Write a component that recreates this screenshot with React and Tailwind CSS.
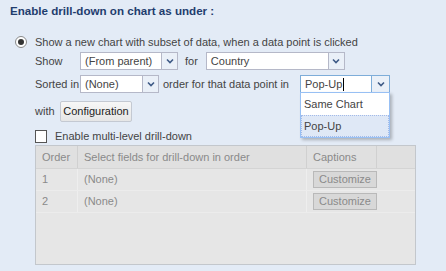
import React from "react";

const Chevron = () => (
  <svg width="8" height="6" viewBox="0 0 8 6">
    <polyline points="1,1.5 4,4.5 7,1.5" fill="none" stroke="#3e5a86" strokeWidth="1.6" />
  </svg>
);

const Combo = ({ value, width, trigger = 16, focused, children }) => (
  <div className="relative flex h-[18px] shrink-0">
    <div
      className={`flex items-center bg-white pl-[4px] border ${
        focused ? "border-[#7eadd9]" : "border-[#b5b8c8]"
      }`}
      style={{ width }}
    >
      <span className="leading-none">{value}</span>
      {focused && <span className="ml-[1px] h-[13px] w-px bg-black" />}
    </div>
    <div
      className={`flex items-center justify-center border border-l-0 bg-[#eaf0f8] ${
        focused ? "border-[#7eadd9]" : "border-[#b5b8c8]"
      }`}
      style={{ width: trigger }}
    >
      <Chevron />
    </div>
    {children}
  </div>
);

const CustomizeBtn = () => (
  <div className="flex h-[17px] w-[64px] items-center justify-center border border-[#b9b9b9] bg-[#d8d8d8] text-[#8a8a8a]">
    Customize
  </div>
);

export default function App() {
  return (
    <div
      className="h-[271px] w-[446px] overflow-hidden bg-[#e3ebf6] text-[11px] text-[#444] whitespace-nowrap"
      style={{ fontFamily: '"Liberation Sans", Arial, sans-serif' }}
    >
      {/* Title */}
      <div className="flex h-[22px] items-center pl-[10px] text-[11.6px] font-bold text-[#1f3d6e]">
        Enable drill-down on chart as under :
      </div>

      {/* Radio option */}
      <div className="mt-[14px] flex h-[12px] items-center pl-[15px]">
        <div className="flex h-[12px] w-[12px] items-center justify-center rounded-full border border-[#8a8a8a] bg-white">
          <div className="h-[6px] w-[6px] rounded-full bg-[#333]" />
        </div>
        <span className="ml-[8px]">Show a new chart with subset of data, when a data point is clicked</span>
      </div>

      <div className="pl-[35px]">
        {/* Show row */}
        <div className="mt-[4px] flex h-[18px] items-center">
          <span className="w-[45px] shrink-0">Show</span>
          <Combo value="(From parent)" width={82} />
          <span className="ml-[7px] mr-[8px]">for</span>
          <Combo value="Country" width={123} />
        </div>

        {/* Sorted row */}
        <div className="mt-[5px] flex h-[18px] items-center">
          <span className="w-[45px] shrink-0">Sorted in</span>
          <Combo value="(None)" width={63} />
          <span className="ml-[4px] w-[137px] shrink-0">order for that data point in</span>
          <Combo value="Pop-Up" width={72} trigger={18} focused>
            <div className="absolute left-0 top-[17px] z-10 w-[90px] border border-[#98c0f4] bg-white shadow-[2px_2px_3px_rgba(0,0,0,0.25)]">
              <div className="flex h-[22px] items-center pl-[3px]">Same Chart</div>
              <div className="flex h-[22px] items-center border border-dotted border-[#a3bae9] bg-[#dfe8f6] pl-[2px]">
                Pop-Up
              </div>
            </div>
          </Combo>
        </div>

        {/* With row */}
        <div className="mt-[8px] flex h-[21px] items-center">
          <span className="w-[25px] shrink-0">with</span>
          <div className="flex h-[21px] w-[72px] items-center justify-center rounded-[2px] border border-[#c4c9d2] bg-gradient-to-b from-[#f7f7f7] to-[#e6e6e6] text-[#222]">
            Configuration
          </div>
        </div>

        {/* Checkbox row */}
        <div className="mt-[8px] flex h-[13px] items-center">
          <div className="h-[13px] w-[12px] border border-[#555] bg-white" />
          <span className="ml-[8px]">Enable multi-level drill-down</span>
        </div>

        {/* Table */}
        <div className="mt-[2px] h-[120px] w-[381px] border border-[#c3c7cc] bg-[#e6e6e6] text-[#8a8a8a]">
          <div className="flex h-[23px] border-b border-[#d4d4d4] bg-[#e0e0e0]">
            <div className="flex w-[42px] items-center border-r border-[#d0d0d0] pl-[6px]">Order</div>
            <div className="flex w-[229px] items-center border-r border-[#d0d0d0] pl-[6px]">
              Select fields for drill-down in order
            </div>
            <div className="flex w-[70px] items-center border-r border-[#d0d0d0] pl-[6px]">Captions</div>
          </div>
          {["1", "2"].map((n) => (
            <div key={n} className="flex h-[22px] border-b border-[#ececec]">
              <div className="flex w-[42px] items-center border-r border-[#eeeeee] pl-[6px]">{n}</div>
              <div className="flex w-[229px] items-center border-r border-[#eeeeee] pl-[6px]">(None)</div>
              <div className="flex w-[70px] items-center pl-[6px]">
                <CustomizeBtn />
              </div>
            </div>
          ))}
        </div>
      </div>
    </div>
  );
}
